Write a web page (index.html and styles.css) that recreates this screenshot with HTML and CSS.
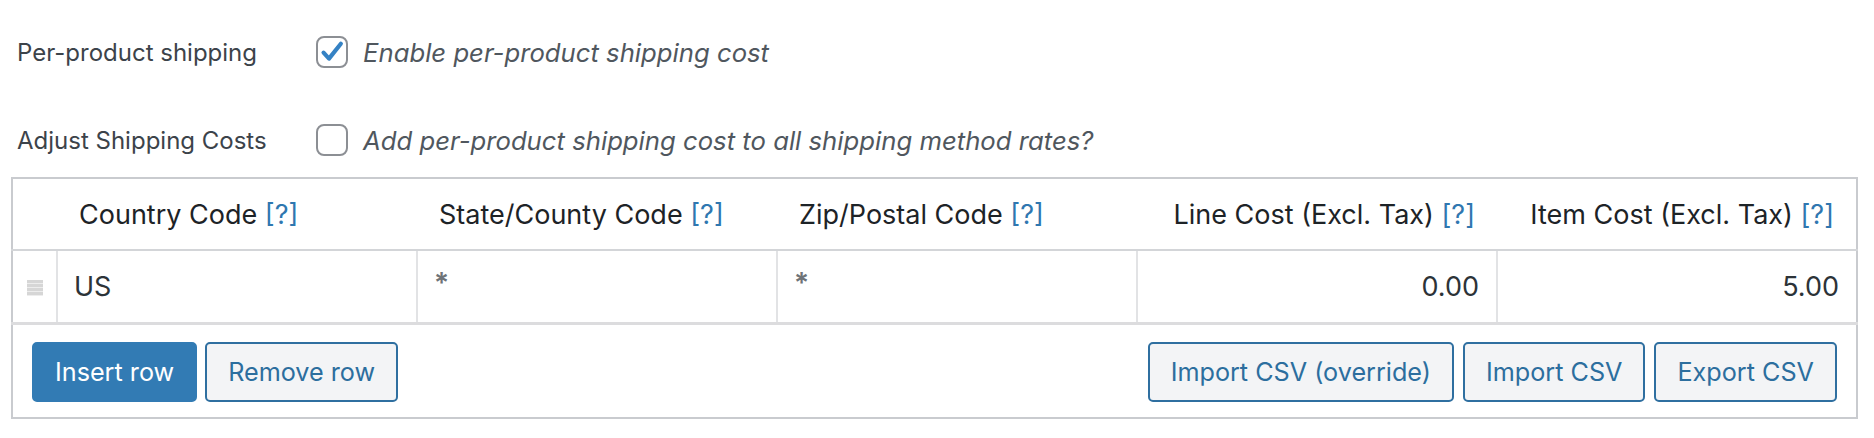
FILE: index.html
```html
<!DOCTYPE html>
<html lang="en">
<head>
    <meta charset="UTF-8">
    <meta name="viewport" content="width=device-width, initial-scale=1.0">
    <title>Per-product shipping</title>
    <link rel="stylesheet" href="styles.css">
</head>
<body>
    <div class="settings">
        <div class="form-row">
            <div class="label">Per-product shipping</div>
            <label class="check">
                <span class="box checked">
                    <svg viewBox="0 0 20 20" width="26" height="26"><path d="M3.5 10.5l4.2 4.6L16.8 3.6" fill="none" stroke="#3582c4" stroke-width="3.2" stroke-linecap="round" stroke-linejoin="round"/></svg>
                </span>
                <span class="desc">Enable per-product shipping cost</span>
            </label>
        </div>
        <div class="form-row">
            <div class="label">Adjust Shipping Costs</div>
            <label class="check">
                <span class="box"></span>
                <span class="desc">Add per-product shipping cost to all shipping method rates?</span>
            </label>
        </div>

        <table class="rates">
            <thead>
                <tr>
                    <th class="sort"></th>
                    <th>Country Code <a href="#">[?]</a></th>
                    <th>State/County Code <a href="#">[?]</a></th>
                    <th>Zip/Postal Code <a href="#">[?]</a></th>
                    <th class="num">Line Cost (Excl. Tax) <a href="#">[?]</a></th>
                    <th class="num">Item Cost (Excl. Tax) <a href="#">[?]</a></th>
                </tr>
            </thead>
            <tbody>
                <tr>
                    <td class="sort"><span class="handle"></span></td>
                    <td><span class="val">US</span></td>
                    <td><span class="val muted">*</span></td>
                    <td><span class="val muted">*</span></td>
                    <td class="num"><span class="val">0.00</span></td>
                    <td class="num"><span class="val">5.00</span></td>
                </tr>
            </tbody>
            <tfoot>
                <tr>
                    <td colspan="6">
                        <div class="actions">
                            <div class="group">
                                <button class="btn primary">Insert row</button>
                                <button class="btn">Remove row</button>
                            </div>
                            <div class="group">
                                <button class="btn">Import CSV (override)</button>
                                <button class="btn">Import CSV</button>
                                <button class="btn">Export CSV</button>
                            </div>
                        </div>
                    </td>
                </tr>
            </tfoot>
        </table>
    </div>
</body>
</html>
```
FILE: styles.css
```css
body {
    margin: 0;
    background: #fff;
    font-family: Inter, "Noto Sans", sans-serif;
    color: #1d2327;
}
.settings {
    padding: 36px 0 0 11px;
}
.form-row {
    display: flex;
    align-items: center;
    height: 32px;
    margin-bottom: 56px;
}
.form-row:nth-child(2) {
    margin-bottom: 21px;
}
.label {
    width: 299px;
    padding-left: 6px;
    font-size: 24px;
    color: #3c434a;
}
.check {
    display: flex;
    align-items: center;
    gap: 15px;
}
.box {
    width: 28px;
    height: 28px;
    border: 2px solid #8c8f94;
    border-radius: 8px;
    display: flex;
    align-items: center;
    justify-content: center;
    background: #fff;
}
.desc {
    font-size: 25.7px;
    font-style: italic;
    color: #50575e;
}
.rates {
    width: 1847px;
    border-collapse: collapse;
    border: 2px solid #c9cbcf;
    table-layout: fixed;
}
.rates th {
    height: 70px;
    padding: 0 22px;
    font-size: 27px;
    font-weight: 400;
    text-align: left;
    color: #1d2327;
    border-bottom: 2px solid #d3d5d8;
    white-space: nowrap;
}
.rates th.sort,
.rates td.sort {
    width: 44px;
    padding: 0;
}
.rates th a {
    color: #2f77b0;
    text-decoration: none;
}
.rates .num {
    text-align: right;
}
.rates tbody td {
    height: 71px;
    padding: 0 16px;
    border-left: 2px solid #e2e3e5;
    border-bottom: 3px solid #dcdcde;
    font-size: 27px;
    color: #2c3338;
}
.rates tbody td.sort {
    border-left: 0;
    text-align: center;
}
.rates tbody td.num {
    padding-right: 17px;
}
.handle {
    display: inline-block;
    width: 16px;
    height: 16px;
    margin-top: 2px;
    background: repeating-linear-gradient(#d6d6d6 0 3px, #ededed 3px 4px);
}
.val.muted {
    color: #6f7378;
    font-size: 28px;
    font-weight: 600;
    position: relative;
    top: -4px;
}
.rates tfoot td {
    padding: 17px 19px 15px 19px;
}
.actions {
    display: flex;
    justify-content: space-between;
}
.group {
    display: flex;
    gap: 8px;
}
.group + .group {
    gap: 9px;
}
.btn {
    height: 60px;
    padding: 0 21px;
    font-family: Inter, "Noto Sans", sans-serif;
    font-size: 25.2px;
    color: #2c6e9e;
    background: #f3f4f6;
    border: 2px solid #2f6fa0;
    border-radius: 5px;
}
.btn.primary {
    background: #327bb4;
    border-color: #327bb4;
    color: #fff;
}
```
